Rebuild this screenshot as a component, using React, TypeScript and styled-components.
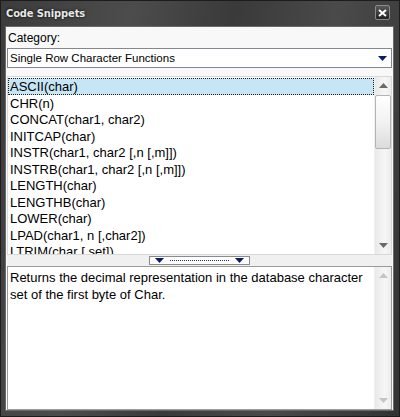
import * as React from "react";
import styled, { createGlobalStyle } from "styled-components";

const GlobalStyle = createGlobalStyle`
  html, body {
    margin: 0;
    padding: 0;
    background: #2b2b2b;
  }
`;

const Window = styled.div`
  width: 400px;
  height: 417px;
  box-sizing: border-box;
  display: flex;
  flex-direction: column;
  background: linear-gradient(100deg, #3c3c3c 0%, #4c4c4c 28%, #3a3a3a 50%, #4a4a4a 72%, #333 100%);
  border: 1px solid #1c1c1c;
  padding: 0 5px 5px 4px;
`;

const TitleBar = styled.div`
  height: 25px;
  display: flex;
  align-items: center;
  justify-content: space-between;
  padding: 0 4px 0 1px;
`;

const Title = styled.div`
  font-family: "DejaVu Sans Condensed", "DejaVu Sans", sans-serif;
  font-weight: bold;
  font-size: 11px;
  letter-spacing: -0.1px;
  color: #e8e8e8;
  text-shadow: 0 0 3px #000;
`;

const CloseButton = styled.div`
  width: 13px;
  height: 13px;
  margin-top: -2px;
  border: 1px solid #8a8a8a;
  border-radius: 2px;
  background: linear-gradient(#5a5a5a, #222);
  display: flex;
  align-items: center;
  justify-content: center;
`;

const Body = styled.div`
  flex: 1;
  display: flex;
  flex-direction: column;
  background: #f8f8f8;
  border: 1px solid #6a6a6a;
  padding: 4px 1px 0 1px;
  min-height: 0;
`;

const Label = styled.div`
  font-family: "Liberation Sans", Arial, sans-serif;
  font-size: 12px;
  color: #000;
  height: 17px;
  line-height: 15px;
  padding-left: 1px;
`;

const Select = styled.div`
  height: 18px;
  border: 1px solid #828790;
  background: #fff;
  display: flex;
  align-items: center;
  justify-content: space-between;
  padding: 0 0 0 2px;
  font-family: "Liberation Sans", Arial, sans-serif;
  font-size: 11.5px;
`;

const SelectArrow = styled.div`
  width: 17px;
  height: 100%;
  display: flex;
  align-items: center;
  justify-content: center;
`;

const ListBox = styled.div`
  margin-top: 8px;
  height: 177px;
  display: flex;
  background: #fff;
  border: 1px solid #d8d8d8;
`;

const Items = styled.div`
  flex: 1;
  overflow: hidden;
  padding-top: 1px;
`;

const Item = styled.div<{ $selected?: boolean }>`
  height: 16.5px;
  line-height: 16px;
  padding-left: 1px;
  box-sizing: border-box;
  font-family: "Liberation Sans", Arial, sans-serif;
  font-size: 13px;
  color: #000;
  white-space: nowrap;
  background: ${(p) => (p.$selected ? "#c6e6f6" : "transparent")};
  border: 1px dotted ${(p) => (p.$selected ? "#222" : "transparent")};
`;

const ScrollTrack = styled.div`
  width: 16px;
  display: flex;
  flex-direction: column;
  background: linear-gradient(90deg, #e9e9e9, #f6f6f6 60%, #ececec);
  border-left: 1px solid #f0f0f0;
`;

const ScrollButton = styled.div`
  height: 17px;
  display: flex;
  align-items: center;
  justify-content: center;
`;

const Thumb = styled.div`
  height: 52px;
  margin: 1px 0 0 0;
  border: 1px solid #b4b4b4;
  border-radius: 2px;
  background: linear-gradient(#ffffff, #f2f2f2 50%, #dcdcdc);
`;

const Spacer = styled.div`
  flex: 1;
`;

const Splitter = styled.div`
  height: 11px;
  display: flex;
  justify-content: center;
  align-items: flex-start;
  background: #f0f0f0;
`;

const SplitterButton = styled.div`
  margin-top: 1px;
  width: 89px;
  height: 7px;
  border: 1px solid #8a8a8a;
  background: #fff;
  display: flex;
  align-items: center;
  justify-content: space-between;
  padding: 0 5px;
  box-sizing: content-box;
`;

const Dots = styled.div`
  flex: 1;
  margin: 0 6px;
  border-bottom: 1px dotted #1c2a8a;
`;

const DescBox = styled.div`
  flex: 1;
  display: flex;
  background: #fff;
  border: 1px solid #9a9a9a;
  min-height: 0;
`;

const DescText = styled.div`
  flex: 1;
  padding: 2px 2px;
  font-family: "Liberation Sans", Arial, sans-serif;
  font-size: 13px;
  line-height: 17px;
  color: #000;
`;

const Arrow = ({ dir, color }: { dir: "up" | "down"; color: string }) => (
  <svg width="9" height="5" viewBox="0 0 9 5">
    {dir === "up" ? (
      <polygon points="4.5,0 9,5 0,5" fill={color} />
    ) : (
      <polygon points="0,0 9,0 4.5,5" fill={color} />
    )}
  </svg>
);

const functions = [
  "ASCII(char)",
  "CHR(n)",
  "CONCAT(char1, char2)",
  "INITCAP(char)",
  "INSTR(char1, char2 [,n [,m]])",
  "INSTRB(char1, char2 [,n [,m]])",
  "LENGTH(char)",
  "LENGTHB(char)",
  "LOWER(char)",
  "LPAD(char1, n [,char2])",
  "LTRIM(char [,set])",
];

export default function App() {
  return (
    <>
      <GlobalStyle />
      <Window>
        <TitleBar>
          <Title>Code Snippets</Title>
          <CloseButton>
            <svg width="9" height="8" viewBox="0 0 9 8">
              <path d="M1 1 L8 7 M8 1 L1 7" stroke="#fff" strokeWidth="2" />
            </svg>
          </CloseButton>
        </TitleBar>
        <Body>
          <Label>Category:</Label>
          <Select>
            Single Row Character Functions
            <SelectArrow>
              <Arrow dir="down" color="#0b1a6a" />
            </SelectArrow>
          </Select>
          <ListBox>
            <Items>
              {functions.map((f, i) => (
                <Item key={f} $selected={i === 0}>
                  {f}
                </Item>
              ))}
            </Items>
            <ScrollTrack>
              <ScrollButton>
                <Arrow dir="up" color="#6a6a6a" />
              </ScrollButton>
              <Thumb />
              <Spacer />
              <ScrollButton>
                <Arrow dir="down" color="#6a6a6a" />
              </ScrollButton>
            </ScrollTrack>
          </ListBox>
          <Splitter>
            <SplitterButton>
              <Arrow dir="down" color="#0b1a6a" />
              <Dots />
              <Arrow dir="down" color="#0b1a6a" />
            </SplitterButton>
          </Splitter>
          <DescBox>
            <DescText>
              Returns the decimal representation in the database character set of the first
              byte of Char.
            </DescText>
            <ScrollTrack>
              <ScrollButton>
                <Arrow dir="up" color="#c4c4c4" />
              </ScrollButton>
              <Spacer />
              <ScrollButton>
                <Arrow dir="down" color="#c4c4c4" />
              </ScrollButton>
            </ScrollTrack>
          </DescBox>
        </Body>
      </Window>
    </>
  );
}
